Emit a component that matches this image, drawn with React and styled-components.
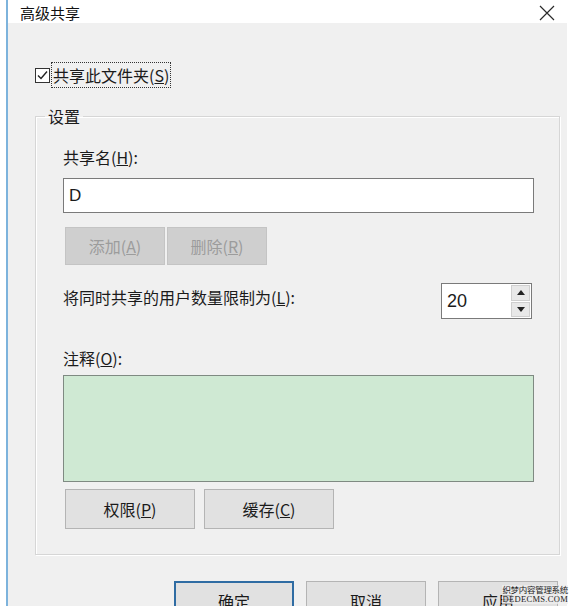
import React from 'react';
import styled, { createGlobalStyle } from 'styled-components';

const FONT = `"Noto Sans CJK SC", "Liberation Sans", sans-serif`;

const Global = createGlobalStyle`
  html, body {
    margin: 0;
    padding: 0;
    background: #ffffff;
    height: 606px;
    overflow: hidden;
  }
  body {
    font-family: ${FONT};
    color: #1b1b1b;
  }
`;

const Window = styled.div`
  position: relative;
  margin-left: 6px;
  border-left: 2px solid #7db3dc;
  height: 606px;
  display: flex;
  flex-direction: column;
`;

const TitleBar = styled.div`
  height: 32px;
  display: flex;
  align-items: flex-start;
  justify-content: space-between;
  padding: 3px 19px 0 12px;
  box-sizing: border-box;
`;

const Title = styled.span`
  font-size: 15px;
  line-height: 20px;
  color: #111;
`;

const Close = styled.svg`
  width: 16px;
  height: 16px;
  margin-top: 2px;
`;

const Body = styled.div`
  flex: 1;
  margin-right: 7px;
  background: #f0f0f0;
  padding: 39px 0 0 27px;
  display: flex;
  flex-direction: column;
`;

const CheckRow = styled.label`
  display: flex;
  align-items: center;
  gap: 2px;
  height: 26px;
  font-size: 16px;
`;

const Box = styled.svg`
  width: 15px;
  height: 15px;
  flex: none;
`;

const Focus = styled.span`
  outline: 1px dotted #333;
  padding: 2px 1px;
  line-height: 20px;
`;

const Group = styled.fieldset`
  margin: 18px 0 0 0;
  width: 525px;
  box-sizing: border-box;
  border: 1px solid #d6d6d6;
  box-shadow: inset 1px 1px 0 #ffffff, 1px 1px 0 #ffffff;
  padding: 21px 25px 25px 27px;
  display: flex;
  flex-direction: column;
`;

const Legend = styled.legend`
  margin-left: -18px;
  padding: 0 3px;
  font-size: 16px;
  line-height: 20px;
`;

const FieldLabel = styled.div`
  font-size: 16px;
  line-height: 20px;
  margin-top: ${(p) => p.$top || 0}px;
`;

const TextBox = styled.div`
  margin-top: 11px;
  height: 35px;
  box-sizing: border-box;
  border: 1px solid #7a7a7a;
  background: #fff;
  padding-left: 5px;
  display: flex;
  align-items: center;
  font-family: "Liberation Sans", sans-serif;
  font-size: 17px;
`;

const ButtonRow = styled.div`
  display: flex;
  gap: ${(p) => p.$gap}px;
  margin-top: ${(p) => p.$top}px;
  margin-left: 2px;
  margin-right: ${(p) => p.$right || 0}px;
  justify-content: ${(p) => (p.$end ? 'flex-end' : 'flex-start')};
`;

const Button = styled.div`
  width: ${(p) => p.$w}px;
  height: ${(p) => p.$h}px;
  box-sizing: border-box;
  display: flex;
  align-items: center;
  justify-content: center;
  font-size: 16px;
  background: ${(p) => (p.$disabled ? '#cfcfcf' : '#e1e1e1')};
  color: ${(p) => (p.$disabled ? '#9c9c9c' : '#1b1b1b')};
  border: ${(p) =>
    p.$default ? '2px solid #2f6ca3' : p.$disabled ? '1px solid #c4c4c4' : '1px solid #b4b4b4'};
`;

const LimitRow = styled.div`
  margin-top: 18px;
  display: flex;
  align-items: center;
  justify-content: space-between;
  padding-right: 2px;
`;

const LimitLabel = styled.span`
  font-size: 16px;
  line-height: 20px;
  margin-bottom: 9px;
`;

const Spin = styled.div`
  width: 91px;
  height: 36px;
  box-sizing: border-box;
  border: 1px solid #7a7a7a;
  background: #fff;
  display: flex;
  align-items: stretch;
`;

const SpinValue = styled.div`
  flex: 1;
  display: flex;
  align-items: center;
  padding-left: 5px;
  font-family: "Liberation Sans", sans-serif;
  font-size: 18px;
`;

const SpinArrows = styled.div`
  width: 19px;
  padding: 1px 1px 1px 0;
  display: flex;
  flex-direction: column;
  gap: 1px;
`;

const Arrow = styled.div`
  flex: 1;
  background: #e8e8e8;
  border: 1px solid #cfcfcf;
  display: flex;
  align-items: center;
  justify-content: center;
`;

const Notes = styled.div`
  margin-top: 7px;
  height: 107px;
  box-sizing: border-box;
  border: 1px solid #7f8a82;
  background: #cfe9d3;
`;

const Watermark = styled.div`
  position: absolute;
  right: 6px;
  bottom: 2px;
  font-size: 8.5px;
  line-height: 9px;
  color: #222;
  text-align: right;
  letter-spacing: -0.3px;
  background: rgba(240, 240, 240, 0.7);
`;

const WatermarkUrl = styled.span`
  font-family: "Liberation Serif", serif;
  letter-spacing: 0.3px;
`;

const Caret = ({ up }) => (
  <svg width="8" height="5" viewBox="0 0 8 5">
    <path d={up ? 'M0 5 L4 0 L8 5 Z' : 'M0 0 L4 5 L8 0 Z'} fill="#222" />
  </svg>
);

export default function App() {
  return (
    <>
      <Global />
      <Window>
        <TitleBar>
          <Title>高级共享</Title>
          <Close viewBox="0 0 16 16">
            <path d="M1 1 L15 15 M15 1 L1 15" stroke="#2a2a2a" strokeWidth="1.2" />
          </Close>
        </TitleBar>
        <Body>
          <CheckRow>
            <Box viewBox="0 0 15 15">
              <rect x="0.5" y="0.5" width="14" height="14" fill="#fff" stroke="#333" />
              <path d="M3 7.5 L6 10.5 L12 3.5" fill="none" stroke="#222" strokeWidth="1.4" />
            </Box>
            <Focus>
              共享此文件夹(<u>S</u>)
            </Focus>
          </CheckRow>
          <Group>
            <Legend>设置</Legend>
            <FieldLabel>
              共享名(<u>H</u>):
            </FieldLabel>
            <TextBox>D</TextBox>
            <ButtonRow $gap={2} $top={14}>
              <Button $w={100} $h={38} $disabled>
                添加(<u>A</u>)
              </Button>
              <Button $w={100} $h={38} $disabled>
                删除(<u>R</u>)
              </Button>
            </ButtonRow>
            <LimitRow>
              <LimitLabel>
                将同时共享的用户数量限制为(<u>L</u>):
              </LimitLabel>
              <Spin>
                <SpinValue>20</SpinValue>
                <SpinArrows>
                  <Arrow>
                    <Caret up />
                  </Arrow>
                  <Arrow>
                    <Caret />
                  </Arrow>
                </SpinArrows>
              </Spin>
            </LimitRow>
            <FieldLabel $top={29}>
              注释(<u>O</u>):
            </FieldLabel>
            <Notes />
            <ButtonRow $gap={9} $top={7}>
              <Button $w={130} $h={40}>
                权限(<u>P</u>)
              </Button>
              <Button $w={130} $h={40}>
                缓存(<u>C</u>)
              </Button>
            </ButtonRow>
          </Group>
          <ButtonRow $gap={12} $top={26} $right={9} $end>
            <Button $w={120} $h={40} $default>
              确定
            </Button>
            <Button $w={120} $h={40}>
              取消
            </Button>
            <Button $w={120} $h={40}>
              应用
            </Button>
          </ButtonRow>
        </Body>
        <Watermark>
          织梦内容管理系统
          <br />
          <WatermarkUrl>DEDECMS.COM</WatermarkUrl>
        </Watermark>
      </Window>
    </>
  );
}
